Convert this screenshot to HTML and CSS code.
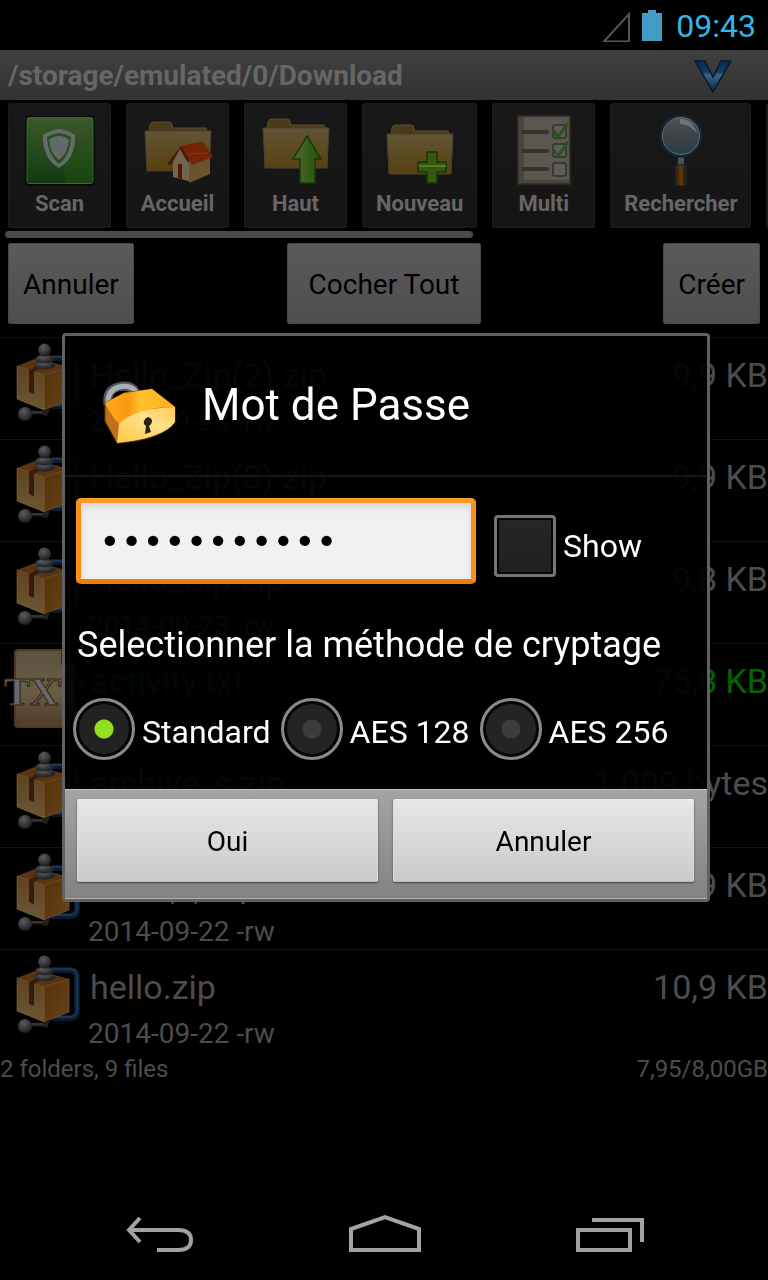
FILE: index.html
```html
<!DOCTYPE html>
<html lang="fr">
<head>
<meta charset="utf-8">
<meta name="viewport" content="width=device-width, initial-scale=1">
<title>Mot de Passe</title>
<link rel="stylesheet" href="styles.css">
</head>
<body>
<svg class="defs" aria-hidden="true">
  <defs>
    <linearGradient id="folderFill" x1="0" y1="0" x2="0" y2="1"><stop offset="0" stop-color="#625436"/><stop offset="1" stop-color="#56410f"/></linearGradient>
    <linearGradient id="scanFill" x1="0" y1="0" x2="0" y2="1"><stop offset="0" stop-color="#3c5a2b"/><stop offset="1" stop-color="#123a10"/></linearGradient>
    <linearGradient id="arrowFill" x1="0" y1="0" x2="1" y2="0"><stop offset="0" stop-color="#4b6b30"/><stop offset="1" stop-color="#24520a"/></linearGradient>
    <linearGradient id="boxLeft" x1="0" y1="0" x2="0" y2="1"><stop offset="0" stop-color="#5f4220"/><stop offset="1" stop-color="#6b5734"/></linearGradient>
    <linearGradient id="boxRight" x1="0" y1="0" x2="1" y2="1"><stop offset="0" stop-color="#573009"/><stop offset="1" stop-color="#66421b"/></linearGradient>
    <radialGradient id="metal" cx=".4" cy=".3" r=".7"><stop offset="0" stop-color="#5c5c5e"/><stop offset="1" stop-color="#1d1d1f"/></radialGradient>
    <linearGradient id="page" x1="0" y1="0" x2="0" y2="1"><stop offset="0" stop-color="#5c5240"/><stop offset=".55" stop-color="#6a5d45"/><stop offset="1" stop-color="#4b3a24"/></linearGradient>
    <linearGradient id="lens" x1="0" y1="0" x2="0" y2="1"><stop offset="0" stop-color="#4c5359"/><stop offset=".5" stop-color="#3e4347"/><stop offset="1" stop-color="#273b49"/></linearGradient>
    <linearGradient id="handle" x1="0" y1="0" x2="1" y2="0"><stop offset="0" stop-color="#3a1f02"/><stop offset=".5" stop-color="#63390a"/><stop offset="1" stop-color="#2e1801"/></linearGradient>
    <linearGradient id="lockTop" x1="0" y1="0" x2="1" y2="0"><stop offset="0" stop-color="#ffa81c"/><stop offset=".35" stop-color="#f99a10"/><stop offset=".5" stop-color="#ffc02c"/><stop offset="1" stop-color="#ffb020"/></linearGradient>
    <linearGradient id="lockFront" x1="0" y1="1" x2="1" y2="0"><stop offset="0" stop-color="#ffc845"/><stop offset=".6" stop-color="#ffe18c"/><stop offset="1" stop-color="#fdca55"/></linearGradient>
    <linearGradient id="veeFill" x1="0" y1="0" x2="0" y2="1"><stop offset="0" stop-color="#0b2a55"/><stop offset=".35" stop-color="#123a66"/><stop offset=".45" stop-color="#3a6685"/><stop offset="1" stop-color="#062347"/></linearGradient>
    <symbol id="folder" viewBox="0 0 68 52">
      <path d="M5 12 6 4q1-3 4-3h15q3 0 3 3l1 3h33l2 4v6H4z" fill="#4b3b19" stroke="#5a4f33"/>
      <path d="M1 10h66l-2 40H3z" fill="url(#folderFill)" stroke="#474238"/>
    </symbol>
    <symbol id="zip" viewBox="0 0 80 101">
      <path d="M52 20h17q8 0 8 8v33q0 7-8 7H52" fill="none" stroke="#0b1c31" stroke-width="6"/>
      <path d="M52 19h17q8 0 8 8v33q0 7-8 7H52" fill="none" stroke="#1a3656" stroke-width="2"/>
      <path d="m17 28 20-8 32 9-25 8z" fill="#5a340f"/>
      <path d="m17 28 27 9v35L17 61z" fill="url(#boxLeft)"/>
      <path d="m69 29-25 8v35l25-10z" fill="url(#boxRight)"/>
      <path d="m17 28 27 9 25-8M44 37v35M17 28v33l27 11 25-10V29" fill="none" stroke="#806238" stroke-opacity=".6"/>
      <path d="m29 32 16-9 5 1-16 10v22l-5-2z" fill="#381b08"/>
      <ellipse cx="45" cy="27" rx="10" ry="4" fill="url(#metal)" stroke="#29292a"/>
      <ellipse cx="44.500" cy="21" rx="9" ry="4" fill="url(#metal)" stroke="#29292a"/>
      <circle cx="44.500" cy="12" r="6.500" fill="url(#metal)"/>
      <path d="m27 73 11 1 12-3-3 7-8-2-12 1z" fill="#202021"/>
      <path d="m31 74 12 0" stroke="#333335" stroke-width="2"/>
      <circle cx="25" cy="76" r="7" fill="url(#metal)"/>
    </symbol>
    <symbol id="txt" viewBox="0 0 84 101">
      <path d="M18 6h44l13 14v60q0 3-3 3H18q-3 0-3-3V9q0-3 3-3z" fill="url(#page)" stroke="#54371e" stroke-width="2"/>
      <path d="M61 7v14h13z" fill="#35291b"/>
      <path d="M17 79q28-6 57 0v3H17z" fill="#55402a"/>
      <text class="txt-mark" x="44" y="61" text-anchor="middle">TXT</text>
    </symbol>
  </defs>
</svg>

<div class="screen">
  <div class="status">
    <svg width="28" height="32" viewBox="0 0 28 32"><path d="M2 31.500 27 4v27.500z" fill="none" stroke="#555" stroke-width="2"/></svg>
    <svg width="20" height="32" viewBox="0 0 20 32"><path d="M6 0h8v3h6v28H0V3h6z" fill="#419dc4"/></svg>
    <time class="clock">09:43</time>
  </div>

  <header class="path-bar">
    <h1 class="path">/storage/emulated/0/Download</h1>
    <svg width="38" height="34" viewBox="0 0 38 34"><path d="M1 2h10l8 16 8-16h10L19 33z" fill="url(#veeFill)" stroke="#081a30" stroke-width="1.500"/></svg>
  </header>

  <nav class="toolbar">
    <button class="tool">
      <svg width="80" height="80" viewBox="0 0 80 80"><rect x="5" y="6" width="70" height="70" rx="3" fill="#080808"/><rect x="7" y="7.500" width="66" height="66" rx="2" fill="url(#scanFill)" stroke="#336c2a"/><path d="M8 51q33-1 64-16v38H46l-4-25z" fill="#295a12" fill-opacity=".35"/><path d="M39 19q8 1 16 6 1 23-16 33-17-10-16-33 8-5 16-6z" fill="#67696b"/><path d="M39 23q7 1 12 4 0 17-12 27-12-10-12-27 5-3 12-4z" fill="#23511c"/><path d="M39 26q6 0 10 4-1 13-10 20-9-7-10-20 4-4 10-4z" fill="#65686b"/></svg>
      <span>Scan</span>
    </button>
    <button class="tool">
      <svg width="80" height="80" viewBox="0 0 80 80"><use href="#folder" x="6" y="11" width="68" height="52"/><path d="m35 48 9-13 10 14v23L35 67z" fill="#706650"/><path d="M51 73V50l21-10v24z" fill="#68552e"/><path d="M29 54 43 36l22-4-5 5-10 16-8-14-9 16z" fill="#4c1708"/><path d="m43 36 22-4 10 15-21 8z" fill="#732505"/><path d="m50 44 20-1" stroke="#8a3c0a"/><path d="M40 54h4v15l-4-1z" fill="#571305"/></svg>
      <span>Accueil</span>
    </button>
    <button class="tool">
      <svg width="80" height="80" viewBox="0 0 80 80"><use href="#folder" x="6" y="8" width="68" height="52"/><path d="m51 26 14 23h-6v24H44V49h-7z" fill="url(#arrowFill)" stroke="#173d07" stroke-width="1.500"/></svg>
      <span>Haut</span>
    </button>
    <button class="tool">
      <svg width="80" height="80" viewBox="0 0 80 80"><use href="#folder" x="6" y="14" width="68" height="52"/><path d="M47 42h10v10h9v10h-9v11H47V62h-9V52h9z" fill="#35590d" stroke="#163a05" stroke-width="1.500"/><path d="M39 56h27" stroke="#5a7627" stroke-width="2"/></svg>
      <span>Nouveau</span>
    </button>
    <button class="tool">
      <svg width="80" height="80" viewBox="0 0 80 80"><path d="M14 6h52v68H14z" fill="#4b453f" stroke="#332e2a" stroke-width="1.500"/><path d="M20 7h45v63H20z" fill="#5b5650"/><path d="M19 22h24M19 41h24M19 59h24" stroke="#393329" stroke-width="4" stroke-linecap="round"/><g fill="#5e5c59" stroke="#303030" stroke-width="1.500"><rect x="49" y="15" width="13" height="13" rx="2"/><rect x="49" y="34" width="13" height="13" rx="2"/><rect x="49" y="53" width="13" height="13" rx="2"/></g><path d="m49 20 5 7 10-14M49 39l5 7 10-14" fill="none" stroke="#28531c" stroke-width="3"/></svg>
      <span>Multi</span>
    </button>
    <button class="tool">
      <svg width="80" height="80" viewBox="0 0 80 80"><path d="M37 47h6v9h-6z" fill="#4c4f52"/><rect x="34" y="54" width="12" height="22" rx="4" fill="#172a34"/><rect x="35.500" y="55" width="9" height="20" rx="3" fill="url(#handle)"/><circle cx="40" cy="26" r="20" fill="url(#lens)" stroke="#16242e" stroke-width="3"/><circle cx="40" cy="26" r="18.500" fill="none" stroke="#5d6b75"/><path d="M39 9q12-1 17 14-8-9-17-9z" fill="#7b8388" fill-opacity=".7"/></svg>
      <span>Rechercher</span>
    </button>
    <button class="tool" aria-label="Plus"></button>
  </nav>
  <div class="scroll-thumb"></div>

  <div class="actions">
    <button class="action">Annuler</button>
    <button class="action action-wide">Cocher Tout</button>
    <button class="action">Créer</button>
  </div>

  <ul class="files">
    <li class="file"><svg class="file-icon"><use href="#zip"/></svg><div class="info"><span class="name">Hello_Zip(2).zip</span><span class="date">2014-09-23 -rw</span></div><span class="size">9,9 KB</span></li>
    <li class="file"><svg class="file-icon"><use href="#zip"/></svg><div class="info"><span class="name">Hello_Zip(3).zip</span><span class="date">2014-09-23 -rw</span></div><span class="size">9,9 KB</span></li>
    <li class="file"><svg class="file-icon"><use href="#zip"/></svg><div class="info"><span class="name">Hello_Zip.zip</span><span class="date">2014-09-23 -rw</span></div><span class="size">9,8 KB</span></li>
    <li class="file file-text"><svg class="file-icon file-icon-txt"><use href="#txt"/></svg><div class="info"><span class="name">activity.txt</span><span class="date">2014-01-29 -rw</span></div><span class="size">75,8 KB</span></li>
    <li class="file"><svg class="file-icon"><use href="#zip"/></svg><div class="info"><span class="name">archive_s.zip</span><span class="date">2014-09-22 -rw</span></div><span class="size">1 009 bytes</span></li>
    <li class="file"><svg class="file-icon"><use href="#zip"/></svg><div class="info"><span class="name">hello(1).zip</span><span class="date">2014-09-22 -rw</span></div><span class="size">10,9 KB</span></li>
    <li class="file"><svg class="file-icon"><use href="#zip"/></svg><div class="info"><span class="name">hello.zip</span><span class="date">2014-09-22 -rw</span></div><span class="size">10,9 KB</span></li>
  </ul>
  <footer class="summary"><span>2 folders, 9 files</span><span>7,95/8,00GB</span></footer>

  <nav class="system-nav">
    <button class="sys" aria-label="Retour"><svg width="68" height="40" viewBox="0 0 68 40"><path d="M14 5 3 17l11 12M4 17h48q13 0 13 10t-13 10H31" fill="none" stroke="#a3a3a3" stroke-width="4"/></svg></button>
    <button class="sys" aria-label="Accueil"><svg width="72" height="40" viewBox="0 0 72 40"><path d="M2 37V16L36 4l34 12v21z" fill="none" stroke="#a3a3a3" stroke-width="4"/></svg></button>
    <button class="sys" aria-label="Applications récentes"><svg width="68" height="40" viewBox="0 0 68 40"><path d="M2 17h52v20H2zM16 7h50v22" fill="none" stroke="#a3a3a3" stroke-width="4"/></svg></button>
  </nav>
</div>

<div class="overlay">
  <form class="dialog" role="dialog" aria-labelledby="dialog-title">
    <div class="dialog-head">
      <svg width="80" height="70" viewBox="0 0 80 70"><path d="M8 27Q6 12 18 9q15-4 20 10" fill="none" stroke="#54575c" stroke-width="9"/><path d="M8 24Q8 12 19 9q12-3 17 5" fill="none" stroke="#a9afb7" stroke-width="5"/><path d="M5 25 24 15l28-4 23 18v15Q62 62 17 65L5 43z" fill="#bf7018" stroke="#6b3d0a"/><path d="m5 25 19-10 28-4 23 18Q41 28 19 46 10 36 5 25z" fill="url(#lockTop)"/><path d="M19 46Q34 30 75 29v15Q64 60 17 65z" fill="url(#lockFront)"/><path d="M48 39q4 1 4 4 0 3-3 5l2 6-6 2 1-8q-3-2-2-5 1-3 4-4z" fill="#29210f"/></svg>
      <h2 class="dialog-title" id="dialog-title">Mot de Passe</h2>
    </div>
    <div class="dialog-body">
      <div class="pass-row">
        <input class="pass" type="password" value="motdepasse1" aria-label="Mot de Passe">
        <label class="option option-check"><input class="check" type="checkbox"><span>Show</span></label>
      </div>
      <p class="prompt" id="method">Selectionner la méthode de cryptage</p>
      <div class="methods" role="radiogroup" aria-labelledby="method">
        <label class="option"><input class="radio" type="radio" name="method" checked><span>Standard</span></label>
        <label class="option"><input class="radio" type="radio" name="method"><span>AES 128</span></label>
        <label class="option"><input class="radio" type="radio" name="method"><span>AES 256</span></label>
      </div>
    </div>
    <div class="dialog-buttons">
      <button class="choice" type="button">Oui</button>
      <button class="choice" type="button">Annuler</button>
    </div>
  </form>
</div>
</body>
</html>
```
FILE: styles.css
```css
* { box-sizing: border-box; }

body {
  margin: 0;
  background: #000;
  color: #4c4c4c;
  font-family: Roboto, "Liberation Sans", sans-serif;
  overflow: hidden;
}

h1, h2, p, ul { margin: 0; padding: 0; }
button, input { font-family: inherit; margin: 0; }
svg { display: block; flex: none; }
.defs { position: absolute; width: 0; height: 0; }

.screen {
  display: flex;
  flex-direction: column;
  min-height: 100vh;
}

.status {
  display: flex;
  align-items: center;
  justify-content: flex-end;
  gap: 12px;
  height: 50px;
  padding: 1px 12px 0 0;
}
.clock {
  color: #33b5e5;
  font-size: 32px;
  line-height: 40px;
  padding-left: 2px;
}

.path-bar {
  display: flex;
  align-items: center;
  justify-content: space-between;
  height: 50px;
  padding: 2px 36px 0 8px;
  background: linear-gradient(#3f3f3f, #333);
}
.path {
  color: #666;
  font-size: 28px;
  line-height: 36px;
  font-weight: 700;
}

.toolbar {
  display: flex;
  gap: 15px;
  padding: 3px 0 3px 8px;
  overflow: hidden;
}
.tool {
  display: flex;
  flex: none;
  flex-direction: column;
  align-items: center;
  min-width: 103px;
  height: 125px;
  padding: 6px 10px 0;
  border: 1px solid #1c1c1c;
  border-radius: 2px;
  background: linear-gradient(#181818, #151515);
  color: #666;
  font-size: 22px;
  line-height: 28px;
  font-weight: 700;
}
.tool span { padding: 0 3px; }

.scroll-thumb {
  width: 61%;
  height: 7px;
  margin-left: 5px;
  border-radius: 4px;
  background: #4a4a4a;
}

.actions {
  display: grid;
  grid-template-columns: 1fr auto 1fr;
  padding: 5px 8px 13px;
}
.action {
  justify-self: start;
  height: 81px;
  padding: 2px 14px 0;
  border: 1px solid #484848;
  border-radius: 2px;
  background: linear-gradient(#5a5a5a, #4e4e4e);
  color: #000;
  font-size: 28px;
}
.action:last-child { justify-self: end; }
.action-wide { padding: 2px 21px 0; }

.files { list-style: none; }
.file {
  display: flex;
  height: 102px;
  border-top: 1px solid #131313;
}
.file-icon {
  width: 80px;
  height: 101px;
  margin-right: 8px;
}
.file-icon-txt { width: 84px; margin-right: 4px; }
.txt-mark {
  fill: #68696b;
  stroke: #33230a;
  stroke-width: 1px;
  font: 700 39px "Liberation Serif", serif;
}
.info {
  display: flex;
  flex: 1;
  flex-direction: column;
  padding-top: 16px;
}
.name, .size {
  font-size: 34px;
  line-height: 42px;
}
.name { padding-left: 2px; }
.date {
  font-size: 28px;
  line-height: 32px;
  padding-top: 10px;
}
.size { padding-top: 16px; }
.file-text { color: #006600; }
.file-text .date { color: #660000; }

.summary {
  display: flex;
  justify-content: space-between;
  font-size: 24px;
  line-height: 36px;
}

.system-nav {
  display: flex;
  align-items: center;
  justify-content: space-between;
  height: 96px;
  margin-top: auto;
  padding: 2px 124px 0 126px;
}
.sys {
  padding: 0;
  border: 0;
  background: none;
}

.overlay {
  position: fixed;
  inset: 50px 0 95px;
  display: flex;
  align-items: center;
  padding: 0 58px 0 62px;
}
.dialog {
  width: 100%;
  border: 3px solid #616161;
  border-radius: 4px;
  background: rgba(0, 0, 0, .92);
  color: #fff;
}
.dialog-head {
  display: flex;
  align-items: center;
  gap: 22px;
  height: 141px;
  padding: 14px 35px 0;
  border-bottom: 2px solid #181818;
}
.dialog-title {
  font-size: 44px;
  line-height: 52px;
  font-weight: 400;
  padding-bottom: 15px;
}
.dialog-body { padding: 21px 8px 29px; }

.pass-row {
  display: flex;
  gap: 18px;
  padding-left: 3px;
}
.pass {
  width: 400px;
  min-width: 0;
  height: 86px;
  padding: 0 18px;
  border: 5px solid #fb8c16;
  border-color: #ff9a28 #fb8c16 #f07c0c;
  border-radius: 5px;
  outline: none;
  background: #f1f1f1;
  box-shadow: inset 0 4px 8px rgba(0, 0, 0, .1);
  color: #000;
  font-family: "DejaVu Sans Mono", monospace;
  font-size: 36px;
}
.option {
  display: flex;
  align-items: center;
  gap: 7px;
  font-size: 32px;
  line-height: 38px;
}
.option span { padding-top: 5px; }
.option-check { padding-top: 9px; }
.option-check span { padding-top: 0; }
.check, .radio {
  appearance: none;
  flex: none;
  width: 62px;
  height: 62px;
  border: 3px solid #747474;
}
.check {
  border-radius: 4px;
  background: linear-gradient(#262626, #202020);
  box-shadow: inset 0 0 0 2px #050505;
}
.radio {
  border-radius: 50%;
  border-color: #8a8a8a;
  background: radial-gradient(circle, #3c3c3c 0 9px, #242424 10px);
  box-shadow: inset 0 0 0 3px #050505;
}
.radio:checked { background: radial-gradient(circle, #92e01e 0 9px, #222 10px); }

.prompt {
  padding: 40px 4px 32px;
  font-size: 36px;
  line-height: 42px;
}
.methods {
  display: flex;
  gap: 10px;
  white-space: nowrap;
}

.dialog-buttons {
  display: flex;
  gap: 15px;
  padding: 9px 13px 16px 12px;
  border-top: 1px solid #c4c4c4;
  border-bottom: 1px solid #b0b0b0;
  background: linear-gradient(#a4a4a4, #828282);
}
.choice {
  flex: 1;
  height: 83px;
  padding: 2px 0 0;
  border: 1px solid #f0f0f0;
  border-color: #f0f0f0 #ddd #bbb;
  border-radius: 2px;
  background: linear-gradient(#e7e7e7, #cacaca);
  box-shadow: 0 1px 2px #444;
  color: #000;
  font-size: 28px;
}
```
